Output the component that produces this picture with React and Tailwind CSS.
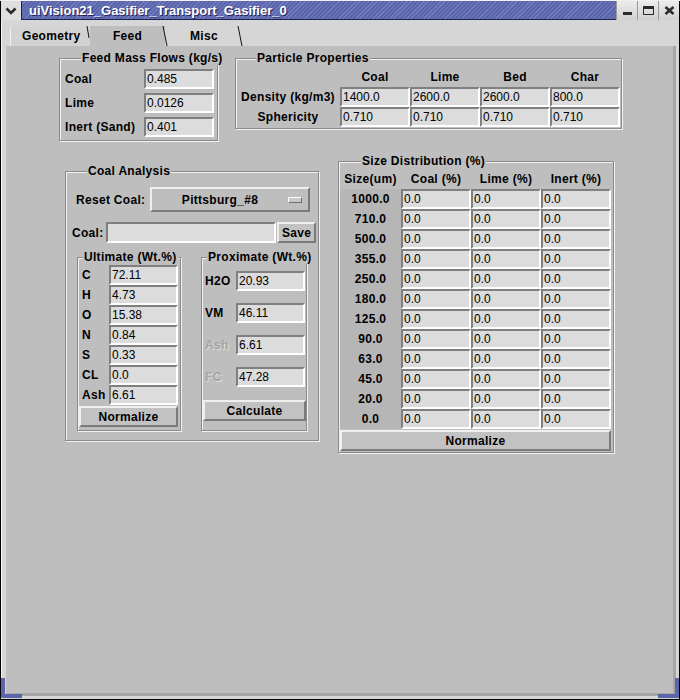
import React from 'react';

// Tk-style sunken entry
const Field = ({ v, cls = 'w-[70px] h-[20px]' }) => (
  <div className={`${cls} shrink-0 bg-[#dcdcdc] border-2 border-t-[#7f7f7f] border-l-[#7f7f7f] border-b-white border-r-white pl-[1px] text-[12px] leading-[16px] tracking-normal text-black whitespace-nowrap overflow-hidden`}>
    {v}
  </div>
);

// raised button
const Btn = ({ children, cls }) => (
  <div className={`${cls} shrink-0 bg-[#c2c2c2] border-2 border-t-[#efefef] border-l-[#efefef] border-b-[#7a7a7a] border-r-[#7a7a7a] flex items-center justify-center font-bold text-[12px] leading-[14px] text-black`}>
    {children}
  </div>
);

// etched group box with title laid over the top line
const Group = ({ title, cls, tl, children }) => (
  <div className={`relative shrink-0 border border-[#8a8a8a] shadow-[inset_1px_1px_0_#f2f2f2,1px_1px_0_#f2f2f2] ${cls}`}>
    <span className={`absolute ${tl} top-[-8px] bg-[#bebebe] px-[1px] font-bold text-[12px] leading-[14px] whitespace-nowrap text-black`}>
      {title}
    </span>
    {children}
  </div>
);

const Slant = ({ cls, h = 20, x2 = 5 }) => (
  <svg className={`absolute ${cls}`} width="7" height={h} viewBox={`0 0 7 ${h}`}>
    <line x1="1" y1="0" x2={x2} y2={h} stroke="#111" strokeWidth="1" />
  </svg>
);

const sizes = ['1000.0', '710.0', '500.0', '355.0', '250.0', '180.0', '125.0', '90.0', '63.0', '45.0', '20.0', '0.0'];
const ultimate = [['C', '72.11'], ['H', '4.73'], ['O', '15.38'], ['N', '0.84'], ['S', '0.33'], ['CL', '0.0'], ['Ash', '6.61']];
const proximate = [['H2O', '20.93', false], ['VM', '46.11', false], ['Ash', '6.61', true], ['FC', '47.28', true]];

export default function App() {
  return (
    <div className="relative w-[680px] h-[700px] bg-[#d6d6d6] flex flex-col font-['Liberation_Sans',Arial,sans-serif] tracking-[0.3px] text-black select-none">
      {/* Title bar */}
      <div className="h-[20px] flex shrink-0 border-t border-t-[#f0f0f0]">
        <div className="w-[21px] h-[19px] bg-[#dedede] border-l border-l-black flex items-center justify-center">
          <svg width="12" height="8" viewBox="0 0 12 8">
            <polyline points="1.5,1.5 6,6 10.5,1.5" fill="none" stroke="#2b2b2b" strokeWidth="2.6" />
          </svg>
        </div>
        <div className="flex-1 h-[19px] border-l border-b border-[#1d2150] bg-[repeating-linear-gradient(135deg,#5b65a9_0px,#5b65a9_2px,#737cc0_2px,#737cc0_3px)] pl-[7px] flex items-center">
          <span className="text-white font-bold text-[13px] leading-[15px] tracking-normal whitespace-nowrap [text-shadow:1px_1px_0_#20245a]">
            uiVision21_Gasifier_Transport_Gasifier_0
          </span>
        </div>
        <div className="flex h-[19px] border-r border-r-black">
          <div className="w-[21px] bg-gradient-to-b from-[#ececec] to-[#d0d0d0] border-l border-l-[#9a9a9a] flex items-end justify-center pb-[5px]">
            <div className="w-[9px] h-[3px] bg-[#2b2b2b]" />
          </div>
          <div className="w-[21px] bg-gradient-to-b from-[#ececec] to-[#d0d0d0] border-l border-l-[#9a9a9a] flex items-center justify-center">
            <div className="w-[11px] h-[9px] border border-[#2b2b2b] border-t-[3px]" />
          </div>
          <div className="w-[21px] bg-gradient-to-b from-[#ececec] to-[#d0d0d0] border-l border-l-[#9a9a9a] flex items-center justify-center">
            <svg width="11" height="9" viewBox="0 0 11 9">
              <path d="M1.5 1 L9.5 8 M9.5 1 L1.5 8" stroke="#2b2b2b" strokeWidth="2.6" />
            </svg>
          </div>
        </div>
      </div>

      {/* Window body */}
      <div className="flex-1 flex flex-col border-l border-r border-b border-black pl-[5px] pr-[3px] pb-[3px] shadow-[inset_1px_0_0_#f4f4f4]">
        {/* Tabs */}
        <div className="h-[26px] shrink-0 flex items-end pl-[4px]">
          <div className="relative w-[80px] h-[19px] bg-[#d2d2d2] border-l border-l-[#eeeeee] pl-[11px] font-bold text-[12px] leading-[19px]">
            Geometry
            <Slant cls="right-[-3px] top-[-1px]" h={12} x2={3} />
          </div>
          <div className="relative w-[75px] h-[20px] bg-[#bebebe] text-center font-bold text-[12px] leading-[20px]">
            Feed
            <Slant cls="right-[-4px] top-0" h={20} x2={5} />
          </div>
          <div className="relative w-[78px] h-[20px] pl-[25px] font-bold text-[12px] leading-[20px]">
            Misc
            <Slant cls="right-[-1px] top-0" h={20} x2={5} />
          </div>
        </div>

        {/* Feed page */}
        <div className="flex-1 bg-[#bebebe] border-r-[3px] border-b-[3px] border-[#a6a6a6]">
          {/* Row 1 */}
          <div className="flex items-start pt-[12px]">
            <Group title="Feed Mass Flows (kg/s)" tl="left-[21px]" cls="ml-[53px] w-[159px] h-[83px]">
              <div className="flex flex-col gap-[4px] pt-[10px]">
                {[['Coal', '0.485'], ['Lime', '0.0126'], ['Inert (Sand)', '0.401']].map(([l, v]) => (
                  <div key={l} className="flex items-center">
                    <div className="w-[84px] pl-[5px] font-bold text-[12px] whitespace-nowrap">{l}</div>
                    <Field v={v} />
                  </div>
                ))}
              </div>
            </Group>

            <Group title="Particle Properties" tl="left-[20px]" cls="ml-[17px] w-[387px] h-[71px]">
              <div className="flex mt-[11px] h-[14px] font-bold text-[12px] leading-[14px]">
                <div className="w-[104px]" />
                {['Coal', 'Lime', 'Bed', 'Char'].map((c) => (
                  <div key={c} className="w-[70px] text-center">{c}</div>
                ))}
              </div>
              <div className="mt-[3px] flex flex-col">
                <div className="flex items-center">
                  <div className="w-[104px] text-center font-bold text-[12px] whitespace-nowrap">Density (kg/m3)</div>
                  {['1400.0', '2600.0', '2600.0', '800.0'].map((v, i) => <Field key={i} v={v} />)}
                </div>
                <div className="flex items-center">
                  <div className="w-[104px] text-center font-bold text-[12px]">Sphericity</div>
                  {['0.710', '0.710', '0.710', '0.710'].map((v, i) => <Field key={i} v={v} />)}
                </div>
              </div>
            </Group>
          </div>

          {/* Row 2 */}
          <div className="flex items-start mt-[20px]">
            <Group title="Coal Analysis" tl="left-[21px]" cls="ml-[59px] mt-[10px] w-[254px] h-[270px]">
              <div className="flex items-center mt-[15px]">
                <div className="w-[84px] pl-[10px] font-bold text-[12px] whitespace-nowrap">Reset Coal:</div>
                <div className="w-[160px] h-[25px] bg-[#bebebe] border-2 border-t-[#efefef] border-l-[#efefef] border-b-[#7a7a7a] border-r-[#7a7a7a] flex items-center">
                  <div className="flex-1 text-center font-bold text-[12px]">Pittsburg_#8</div>
                  <div className="w-[14px] h-[6px] bg-[#c8c8c8] border border-t-white border-l-white border-b-[#6f6f6f] border-r-[#6f6f6f] mr-[6px]" />
                </div>
              </div>
              <div className="flex items-center mt-[10px]">
                <div className="w-[40px] pl-[6px] font-bold text-[12px]">Coal:</div>
                <Field v="" cls="w-[170px] h-[21px]" />
                <Btn cls="ml-[1px] w-[39px] h-[21px]">Save</Btn>
              </div>
              <div className="flex items-start mt-[14px]">
                <Group title="Ultimate (Wt.%)" tl="left-[5px]" cls="ml-[11px] w-[104px] h-[174px]">
                  <div className="flex flex-col mt-[7px]">
                    {ultimate.map(([l, v]) => (
                      <div key={l} className="flex items-center">
                        <div className="w-[31px] pl-[4px] font-bold text-[12px]">{l}</div>
                        <Field v={v} cls="w-[69px] h-[20px]" />
                      </div>
                    ))}
                  </div>
                  <Btn cls="ml-[1px] mt-[1px] w-[99px] h-[21px]">Normalize</Btn>
                </Group>
                <Group title="Proximate (Wt.%)" tl="left-[5px]" cls="ml-[20px] w-[106px] h-[174px]">
                  <div className="flex flex-col gap-[12px] mt-[13px]">
                    {proximate.map(([l, v, dis]) => (
                      <div key={l} className="flex items-center">
                        <div className={`w-[34px] pl-[3px] font-bold text-[12px] ${dis ? 'text-[#a4a4a4] [text-shadow:1px_1px_0_#dedede]' : ''}`}>{l}</div>
                        <Field v={v} cls="w-[69px] h-[20px]" />
                      </div>
                    ))}
                  </div>
                  <Btn cls="ml-[1px] mt-[13px] w-[103px] h-[21px]">Calculate</Btn>
                </Group>
              </div>
            </Group>

            <Group title="Size Distribution (%)" tl="left-[22px]" cls="ml-[19px] w-[276px] h-[292px]">
              <div className="flex ml-[1px] mt-[10px] h-[14px] font-bold text-[12px] leading-[14px] whitespace-nowrap">
                <div className="w-[61px] text-center">Size(um)</div>
                <div className="w-[70px] text-center">Coal (%)</div>
                <div className="w-[70px] text-center">Lime (%)</div>
                <div className="w-[70px] text-center">Inert (%)</div>
              </div>
              <div className="flex flex-col ml-[1px] mt-[3px]">
                {sizes.map((s) => (
                  <div key={s} className="flex items-center">
                    <div className="w-[61px] h-[20px] bg-[#b6b6b6] text-center font-bold text-[12px] leading-[20px]">{s}</div>
                    <Field v="0.0" />
                    <Field v="0.0" />
                    <Field v="0.0" />
                  </div>
                ))}
              </div>
              <Btn cls="ml-[1px] mt-[1px] w-[271px] h-[21px]">Normalize</Btn>
            </Group>
          </div>
        </div>
      </div>

      {/* frame corner accents */}
      <div className="absolute left-[1px] top-[678px] w-[4px] h-[18px] bg-[#5b65a9]" />
      <div className="absolute left-[1px] top-[694px] w-[21px] h-[4px] bg-[#5b65a9]" />
      <div className="absolute right-[1px] top-[678px] w-[4px] h-[18px] bg-[#5b65a9]" />
      <div className="absolute right-[1px] top-[694px] w-[21px] h-[4px] bg-[#5b65a9]" />
    </div>
  );
}
